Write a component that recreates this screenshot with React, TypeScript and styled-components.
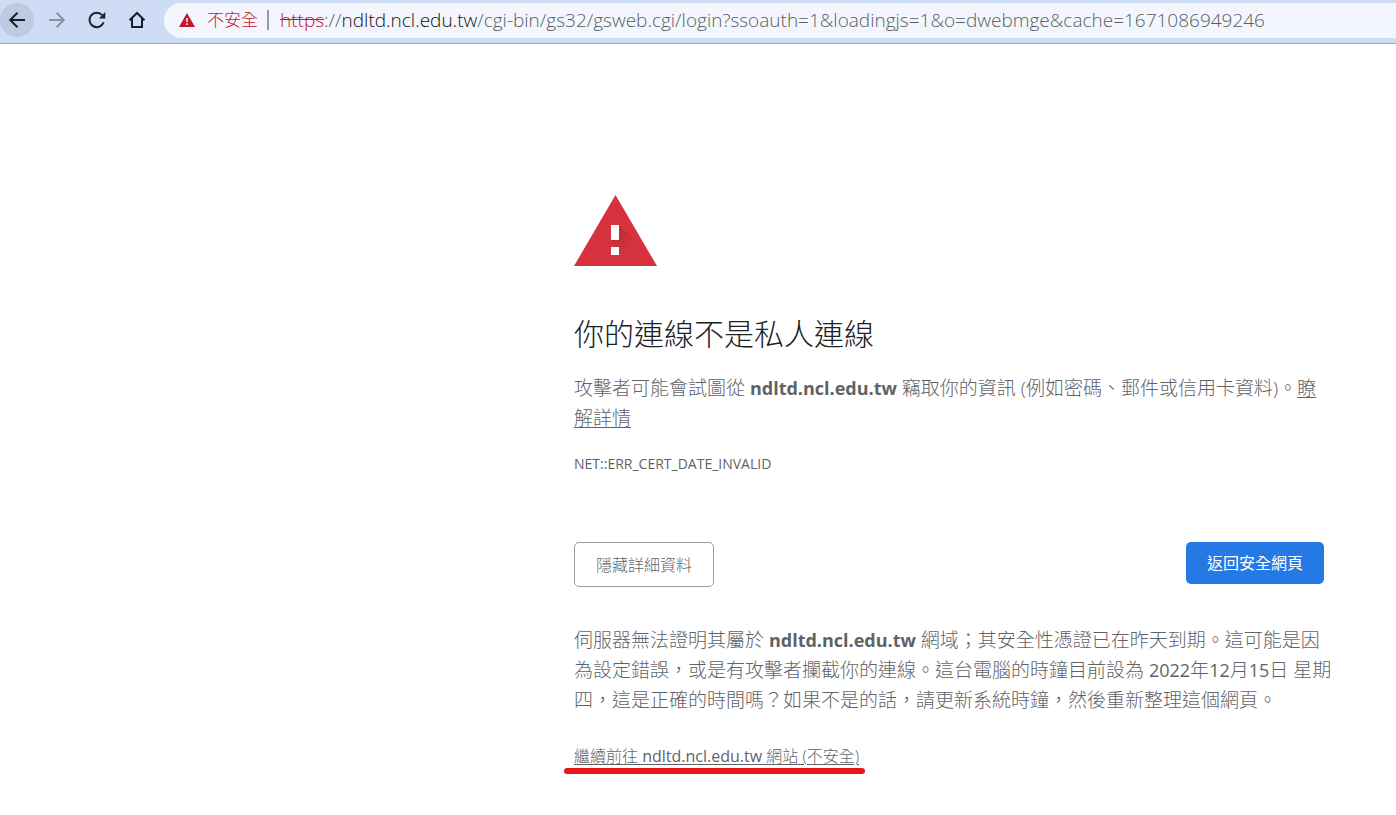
import React from "react";
import styled, { createGlobalStyle } from "styled-components";

const GlobalStyle = createGlobalStyle`
  * { box-sizing: border-box; }
  body {
    margin: 0;
    background: #fff;
    color: #5f6368;
    font-family: "Open Sans", "Noto Sans CJK TC", sans-serif;
    font-weight: 300;
  }
`;

const Toolbar = styled.header`
  display: flex;
  align-items: center;
  gap: 6px;
  height: 44px;
  padding-bottom: 3px;
  background: #cedcf5;
  border-bottom: 1px solid #98aacd;
  overflow: hidden;
`;

const NavButton = styled.button<{ $active?: boolean; $dim?: boolean }>`
  display: flex;
  align-items: center;
  justify-content: center;
  flex: none;
  width: 34px;
  height: 34px;
  padding: 0;
  border: 0;
  border-radius: 50%;
  background: ${(p) => (p.$active ? "#bccbe2" : "transparent")};
  color: ${(p) => (p.$dim ? "#8794a8" : "#1b2028")};
`;

const AddressBar = styled.div`
  display: flex;
  align-items: center;
  flex: 1;
  min-width: 0;
  height: 35px;
  margin-left: 4px;
  padding-left: 15px;
  border-radius: 18px 0 0 18px;
  background: #f3f7fd;
  font-size: 19px;
  line-height: 24px;
  white-space: nowrap;
`;

const Security = styled.span`
  display: flex;
  align-items: center;
  gap: 12px;
  margin-right: 11px;
  padding-right: 9px;
  color: #c5162e;
  font-size: 17px;
  line-height: 20px;
  border-right: 2px solid #989ca2;
`;

const Url = styled.span`
  color: #5a5e64;
`;

const Scheme = styled.s`
  color: #c5162e;
`;

const Host = styled.span`
  color: #101114;
`;

const Page = styled.main`
  display: flex;
  justify-content: flex-end;
  padding: 151px 64px 40px 72px;
`;

const Content = styled.section`
  width: 100%;
  max-width: 758px;
`;

const WarningIcon = styled.svg`
  display: block;
`;

const Title = styled.h1`
  margin: 50px 0 21px;
  color: #202124;
  font-size: 30px;
  font-weight: 300;
  line-height: 36px;
`;

const Message = styled.p`
  margin: 0;
  font-size: 19px;
  line-height: 30px;
`;

const Domain = styled.strong`
  font-size: 18px;
  font-weight: 700;
`;

const Numeral = styled.span`
  font-size: 18px;
  font-weight: 400;
`;

const Latin = styled.span`
  font-weight: 400;
`;

const TextLink = styled.a`
  color: inherit;
  text-underline-offset: 2px;
  text-decoration-thickness: 1px;
`;

const ErrorCode = styled.div`
  margin-top: 21px;
  font-size: 14px;
  font-weight: 400;
  line-height: 20px;
`;

const Actions = styled.div`
  display: flex;
  justify-content: space-between;
  align-items: flex-start;
  max-width: 750px;
  margin: 68px 0 38px;
`;

const ActionButton = styled.button<{ $primary?: boolean }>`
  height: ${(p) => (p.$primary ? 42 : 45)}px;
  padding: 0 21px;
  border: ${(p) => (p.$primary ? "0" : "1px solid #9a9da2")};
  border-radius: 5px;
  background: ${(p) => (p.$primary ? "#2479e4" : "#fff")};
  color: ${(p) => (p.$primary ? "#fff" : "#5f6368")};
  font-family: inherit;
  font-size: 16px;
  font-weight: ${(p) => (p.$primary ? 400 : 300)};
  line-height: 24px;
`;

const Proceed = styled.div`
  position: relative;
  width: fit-content;
  margin-top: 26px;
  font-size: 16px;
  line-height: 30px;

  &::after {
    content: "";
    position: absolute;
    left: -10px;
    right: -6px;
    bottom: -3px;
    height: 6px;
    border-radius: 3px;
    background: #e5171d;
  }
`;

export default function App() {
  return (
    <div lang="zh-Hant">
      <GlobalStyle />
      <Toolbar>
        <NavButton $active aria-label="上一頁">
          <svg width="18" height="18" viewBox="0 0 18 18" fill="none" stroke="currentColor" strokeWidth="2">
            <path d="M17 9H2.5M9.5 1.7 2.2 9l7.3 7.3" />
          </svg>
        </NavButton>
        <NavButton $dim aria-label="下一頁">
          <svg width="18" height="18" viewBox="0 0 18 18" fill="none" stroke="currentColor" strokeWidth="2">
            <path d="M1 9h14.5M8.5 1.7 15.8 9l-7.3 7.3" />
          </svg>
        </NavButton>
        <NavButton aria-label="重新載入">
          <svg width="18" height="18" viewBox="0 0 18 18" fill="none" stroke="currentColor" strokeWidth="2">
            <path d="M15.6 11.2A7.2 7.2 0 1 1 14.2 4.2" />
            <path d="M17.300 1v6.500h-6.500z" fill="currentColor" stroke="none" />
          </svg>
        </NavButton>
        <NavButton aria-label="首頁">
          <svg width="18" height="18" viewBox="0 0 18 18" fill="none" stroke="currentColor" strokeWidth="2">
            <path d="M1.500 9.300 9 2l7.500 7.300M4 7.500V16h10V7.500" />
          </svg>
        </NavButton>
        <AddressBar role="textbox" aria-label="網址">
          <Security>
            <svg width="16" height="14" viewBox="0 0 16 14">
              <path d="M8 0l8 14H0z" fill="#c5162e" />
              <path d="M7.200 5h1.600v4H7.200zM7.200 10.200h1.600v1.700H7.200z" fill="#f3f7fd" />
            </svg>
            不安全
          </Security>
          <Url>
            <Scheme>https</Scheme>://<Host>ndltd.ncl.edu.tw</Host>
            /cgi-bin/gs32/gsweb.cgi/login?ssoauth=1&amp;loadingjs=1&amp;o=dwebmge&amp;cache=1671086949246
          </Url>
        </AddressBar>
      </Toolbar>
      <Page>
        <Content>
          <WarningIcon width="83" height="71" viewBox="0 0 83 71" aria-hidden="true">
            <defs>
              <linearGradient id="shade" gradientUnits="userSpaceOnUse" x1="40" y1="38" x2="56" y2="54">
                <stop offset="0" stopColor="#b92d36" />
                <stop offset="1" stopColor="#d5323d" />
              </linearGradient>
            </defs>
            <path d="M41.500 0 83 71H0z" fill="#d5323d" />
            <path d="M45 30 64 49 73 65 67 71H48L37 60 45 60V52L37 45 45 45z" fill="url(#shade)" />
            <path d="M37 30h8v15h-8zM37 52h8v8h-8z" fill="#fff" />
          </WarningIcon>
          <Title>你的連線不是私人連線</Title>
          <Message>
            攻擊者可能會試圖從 <Domain>ndltd.ncl.edu.tw</Domain> 竊取你的資訊 (例如密碼、郵件或信用卡資料)。<TextLink href="#details">瞭解詳情</TextLink>
          </Message>
          <ErrorCode>NET::ERR_CERT_DATE_INVALID</ErrorCode>
          <Actions>
            <ActionButton>隱藏詳細資料</ActionButton>
            <ActionButton $primary>返回安全網頁</ActionButton>
          </Actions>
          <Message>
            伺服器無法證明其屬於 <Domain>ndltd.ncl.edu.tw</Domain> 網域；其安全性憑證已在昨天到期。這可能是因為設定錯誤，或是有攻擊者攔截你的連線。這台電腦的時鐘目前設為 <Numeral>2022</Numeral>年<Numeral>12</Numeral>月<Numeral>15</Numeral>日 星期四，這是正確的時間嗎？如果不是的話，請更新系統時鐘，然後重新整理這個網頁。
          </Message>
          <Proceed>
            <TextLink href="#proceed">繼續前往 <Latin>ndltd.ncl.edu.tw</Latin> 網站 (不安全)</TextLink>
          </Proceed>
        </Content>
      </Page>
    </div>
  );
}
